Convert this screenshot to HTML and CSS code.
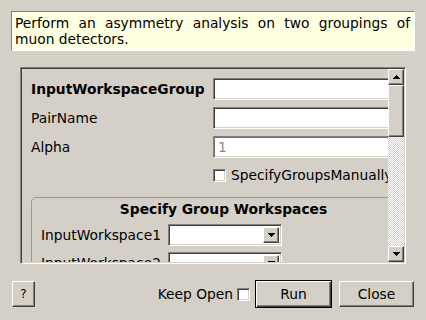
FILE: index.html
```html
<!DOCTYPE html>
<html lang="en">
<head>
    <meta charset="UTF-8">
    <meta name="viewport" content="width=device-width, initial-scale=1.0">
    <title>AsymmetryCalc input dialog</title>
    <link rel="stylesheet" href="styles.css">
</head>
<body>
    <div class="dialog">
        <p class="description">Perform an asymmetry analysis on two groupings of muon detectors.</p>

        <div class="scroll-frame">
            <div class="viewport">
                <div class="content">
                    <div class="properties">
                        <span class="prop-label bold">InputWorkspaceGroup</span>
                        <div class="field"></div>
                        <span class="prop-label">PairName</span>
                        <div class="field"></div>
                        <span class="prop-label">Alpha</span>
                        <div class="field field-disabled">1</div>
                        <span></span>
                        <div class="check-row">
                            <span class="checkbox"></span>
                            <span>SpecifyGroupsManually</span>
                        </div>
                    </div>

                    <div class="group">
                        <div class="group-title">Specify Group Workspaces</div>
                        <div class="group-rows">
                            <span class="prop-label">InputWorkspace1</span>
                            <div class="combo">
                                <span class="combo-btn">
                                    <svg width="7" height="4" viewBox="0 0 7 4"><path d="M0 0h7v1H6v1H5v1H4v1H3V3H2V2H1V1H0z"/></svg>
                                </span>
                            </div>
                            <span class="prop-label">InputWorkspace2</span>
                            <div class="combo">
                                <span class="combo-btn">
                                    <svg width="7" height="4" viewBox="0 0 7 4"><path d="M0 0h7v1H6v1H5v1H4v1H3V3H2V2H1V1H0z"/></svg>
                                </span>
                            </div>
                        </div>
                    </div>
                </div>
            </div>

            <div class="scrollbar">
                <span class="raised scroll-btn">
                    <svg width="7" height="4" viewBox="0 0 7 4"><path d="M3 0h1v1h1v1h1v1h1v1H0V3h1V2h1V1h1z"/></svg>
                </span>
                <span class="raised scroll-thumb"></span>
                <span class="scroll-track"></span>
                <span class="raised scroll-btn">
                    <svg width="7" height="4" viewBox="0 0 7 4"><path d="M0 0h7v1H6v1H5v1H4v1H3V3H2V2H1V1H0z"/></svg>
                </span>
            </div>
        </div>

        <div class="buttons">
            <button class="raised btn btn-help">?</button>
            <span class="spacer"></span>
            <label class="keep-open">Keep Open <span class="checkbox"></span></label>
            <button class="btn btn-default">Run</button>
            <button class="raised btn btn-close">Close</button>
        </div>
    </div>
</body>
</html>
```

FILE: styles.css
```css
body {
    margin: 0;
    background: #d4d0c8;
    font-family: "DejaVu Sans", sans-serif;
    font-size: 13.8px;
    color: #000;
}

.dialog {
    padding: 11px;
}

.description {
    margin: 0;
    height: 32px;
    padding: 3px 4px 3px 3px;
    line-height: 16px;
    background: #ffffe1;
    border: 1px solid;
    border-color: #808080 #fff #fff #808080;
    text-align: justify;
}

/* sunken frame round the property list */
.scroll-frame {
    display: flex;
    width: 382px;
    height: 193px;
    margin: 16px 0 0 9px;
    padding: 1px;
    border: 1px solid;
    border-color: #808080 #fff #fff #808080;
    box-shadow: inset 1px 1px 0 #404040, inset -1px -1px 0 #d4d0c8;
}

.viewport {
    flex: 1;
    overflow: hidden;
}

.content {
    width: 394px;
    padding: 9px 0 0 9px;
}

.properties {
    display: grid;
    grid-template-columns: 182px 202px;
    grid-template-rows: 22px 22px 22px 20px;
    row-gap: 7px;
    align-items: center;
}

.prop-label {
    white-space: nowrap;
}

.bold {
    font-weight: bold;
}

.field {
    box-sizing: border-box;
    height: 22px;
    padding: 0 4px;
    line-height: 20px;
    background: #fff;
    border: 1px solid;
    border-color: #808080 #fff #fff #808080;
    box-shadow: inset 1px 1px 0 #404040, inset -1px -1px 0 #d4d0c8;
}

.field-disabled {
    color: #8a8a8a;
    box-shadow: inset 1px 1px 0 #707070, inset -1px -1px 0 #d4d0c8;
}

.check-row {
    display: flex;
    align-items: center;
    gap: 5px;
    white-space: nowrap;
}

.checkbox {
    box-sizing: border-box;
    display: inline-block;
    width: 13px;
    height: 13px;
    flex: none;
    background: #fff;
    border: 1px solid;
    border-color: #808080 #fff #fff #808080;
    box-shadow: inset 1px 1px 0 #404040, inset -1px -1px 0 #d4d0c8;
}

.group {
    box-sizing: border-box;
    width: 385px;
    height: 90px;
    margin-top: 12px;
    padding: 3px 9px 0 9px;
    border: 1px solid #9a9a9a;
    border-radius: 5px;
}

.group-title {
    font-weight: bold;
    text-align: center;
    line-height: 16px;
}

.group-rows {
    display: grid;
    grid-template-columns: 127px 114px;
    grid-auto-rows: 22px;
    row-gap: 6px;
    align-items: center;
    margin-top: 7px;
}

.combo {
    box-sizing: border-box;
    height: 22px;
    display: flex;
    justify-content: flex-end;
    padding: 2px;
    background: #fff;
    border: 1px solid;
    border-color: #808080 #fff #fff #808080;
    box-shadow: inset 1px 1px 0 #404040, inset -1px -1px 0 #d4d0c8;
}

.combo-btn {
    box-sizing: border-box;
    width: 16px;
    display: flex;
    align-items: center;
    justify-content: center;
    background: #d4d0c8;
    border: 1px solid;
    border-color: #fff #404040 #404040 #fff;
    box-shadow: inset -1px -1px 0 #808080;
}

.raised {
    box-sizing: border-box;
    background: #d4d0c8;
    border: 1px solid;
    border-color: #fff #404040 #404040 #fff;
    box-shadow: inset -1px -1px 0 #808080;
}

.scrollbar {
    width: 16px;
    display: flex;
    flex-direction: column;
}

.scroll-btn {
    height: 16px;
    display: flex;
    align-items: center;
    justify-content: center;
}

.scroll-thumb {
    height: 52px;
}

.scroll-track {
    flex: 1;
    background: repeating-conic-gradient(#fff 0 25%, #d4d0c8 0 50%) 0 0 / 2px 2px;
}

.buttons {
    display: flex;
    align-items: center;
    margin: 16px 1px 0 1px;
}

.spacer {
    flex: 1;
}

.btn {
    font-family: inherit;
    font-size: inherit;
    color: #000;
    padding: 0;
    height: 26px;
}

.btn-help {
    width: 23px;
    font-size: 12px;
}

.keep-open {
    display: flex;
    align-items: center;
    gap: 4px;
    margin-right: 5px;
}

.btn-default {
    box-sizing: border-box;
    width: 77px;
    height: 28px;
    background: #d4d0c8;
    border: 1px solid #000;
    box-shadow: inset 1px 1px 0 #fff, inset -1px -1px 0 #404040, inset -2px -2px 0 #808080;
}

.btn-close {
    width: 75px;
    margin-left: 7px;
}
```
